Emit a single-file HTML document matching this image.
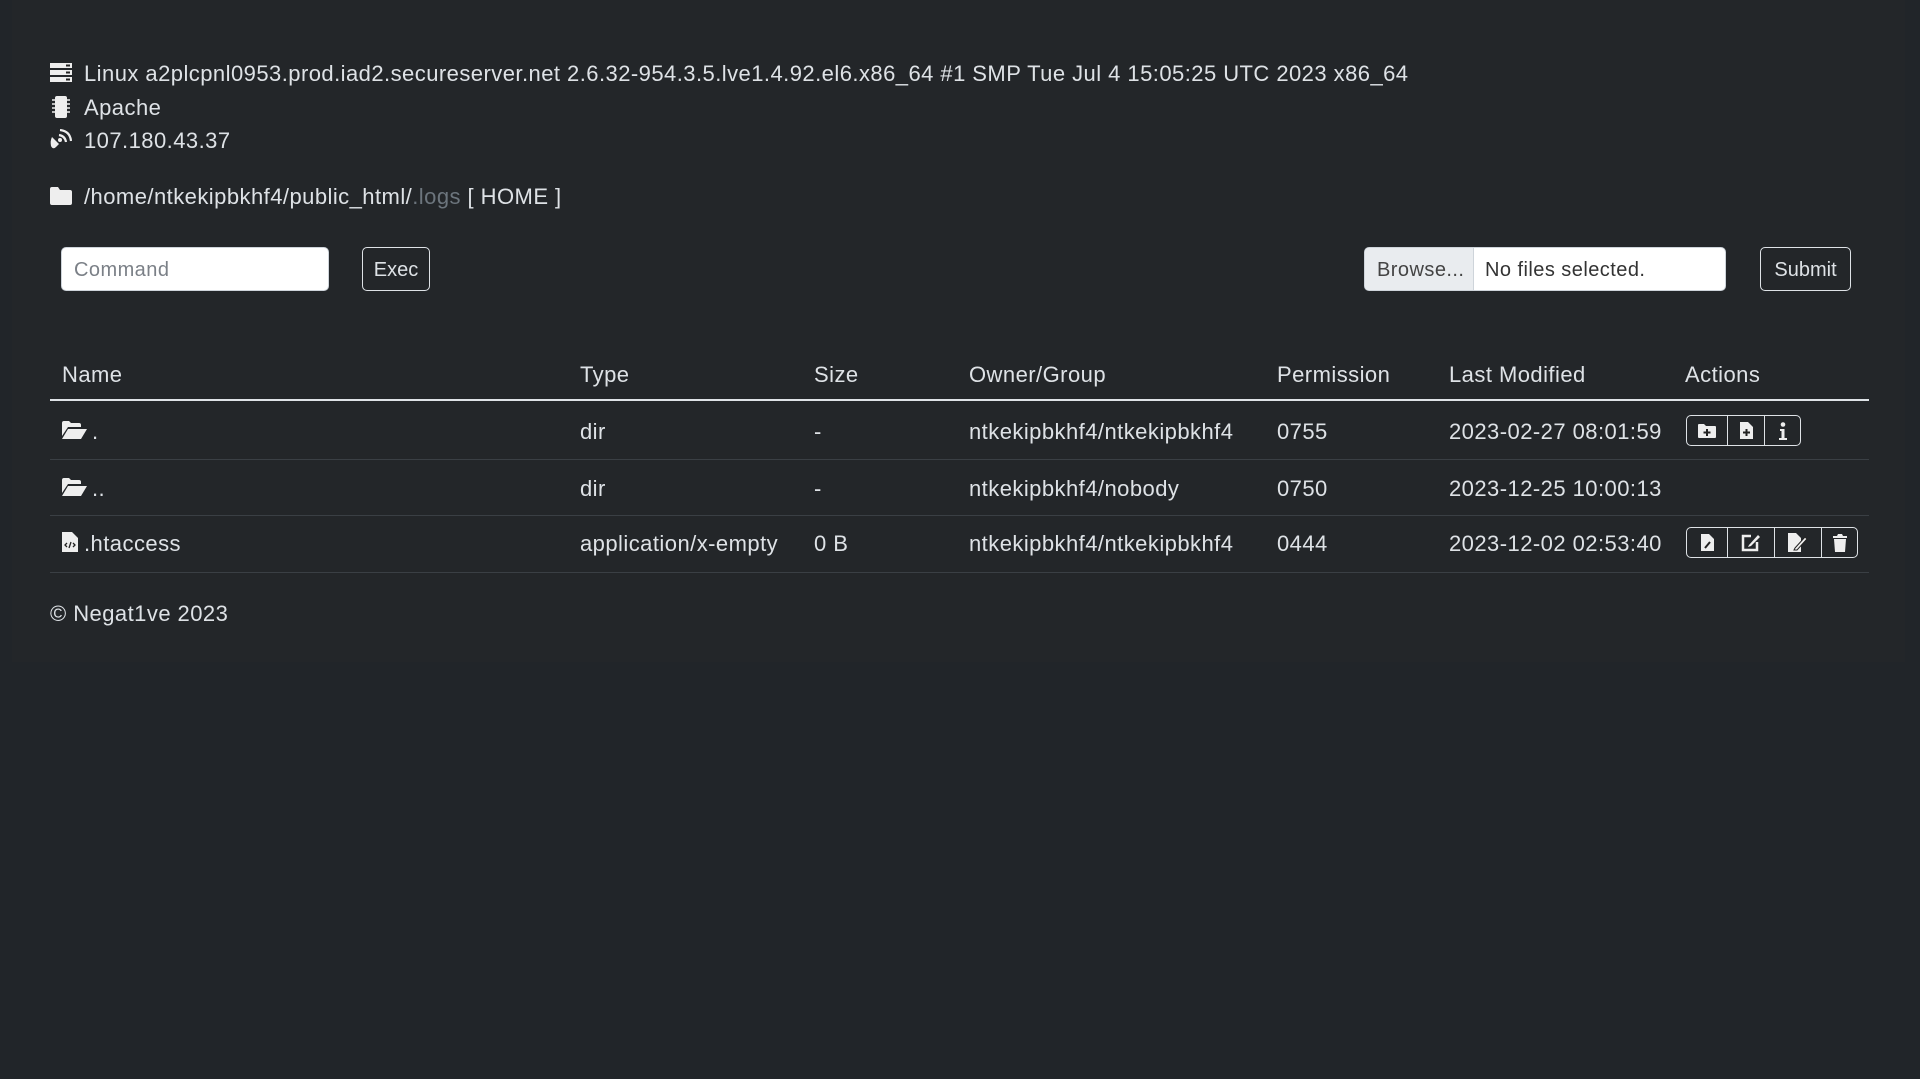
<!DOCTYPE html>
<html><head><meta charset="utf-8"><style>
html,body{margin:0;padding:0;width:1920px;height:1079px;background:#212529;overflow:hidden}
body{font-family:"Liberation Sans",sans-serif;color:#dee2e6;font-size:22px;position:relative}
.panel{position:absolute;left:12px;top:0;width:1893px;height:662px;background:#232629}
.t{position:absolute;white-space:nowrap;line-height:24px;letter-spacing:0.45px}
.ic{position:absolute}
.inp{position:absolute;background:#fff;border-radius:5px;border:1px solid #ced4da;box-sizing:border-box}
.btn{position:absolute;border:1px solid #dee2e6;border-radius:5px;box-sizing:border-box;color:#dee2e6;font-size:20px;text-align:center}
.hr{position:absolute;left:50px;width:1819px;height:1px;background:#3a3f44}
.grp{position:absolute;border:1px solid #dee2e6;border-radius:5px;box-sizing:border-box;height:31px;display:flex}
.grp div{border-right:1px solid #dee2e6;display:flex;align-items:center;justify-content:center}
.grp div:last-child{border-right:none}
</style></head><body>
<div class="panel"></div>

<svg class="ic" style="left:50px;top:63px" width="22" height="19" viewBox="0 0 22 19"><rect x="0" y="0" width="22" height="5" fill="#eee"/><rect x="0" y="7" width="22" height="5" fill="#eee"/><rect x="0" y="14" width="22" height="5" fill="#eee"/><rect x="16" y="1.5" width="4" height="2" fill="#222"/><rect x="16" y="8.5" width="4" height="2" fill="#222"/><rect x="16" y="15.5" width="4" height="2" fill="#222"/></svg>
<div class="t" style="left:84px;top:62px">Linux a2plcpnl0953.prod.iad2.secureserver.net 2.6.32-954.3.5.lve1.4.92.el6.x86_64 #1 SMP Tue Jul 4 15:05:25 UTC 2023 x86_64</div>

<svg class="ic" style="left:52px;top:96px" width="18" height="22" viewBox="0 0 18 22"><rect x="3" y="0" width="12" height="22" rx="2" fill="#eee"/><g stroke="#eee" stroke-width="1.5"><line x1="0" y1="4" x2="3" y2="4"/><line x1="0" y1="8" x2="3" y2="8"/><line x1="0" y1="12" x2="3" y2="12"/><line x1="0" y1="16" x2="3" y2="16"/><line x1="15" y1="4" x2="18" y2="4"/><line x1="15" y1="8" x2="18" y2="8"/><line x1="15" y1="12" x2="18" y2="12"/><line x1="15" y1="16" x2="18" y2="16"/></g></svg>
<div class="t" style="left:84px;top:96px">Apache</div>

<svg class="ic" style="left:50px;top:129px" width="22" height="22" viewBox="0 0 22 22"><path d="M2 8 L9 15 L6 18 Q3 21 1 17 Q0 12 2 8Z" fill="#eee"/><path d="M9 6 Q15 7 16 13" stroke="#eee" stroke-width="2.2" fill="none"/><path d="M10 1 Q20 2 21 12" stroke="#eee" stroke-width="2.2" fill="none"/><circle cx="10" cy="11" r="2" fill="#eee"/></svg>
<div class="t" style="left:84px;top:129px">107.180.43.37</div>

<svg class="ic" style="left:50px;top:187px" width="22" height="18" viewBox="0 0 22 18"><path d="M0 2 Q0 0 2 0 H8 L10 3 H20 Q22 3 22 5 V16 Q22 18 20 18 H2 Q0 18 0 16Z" fill="#eee"/></svg>
<div class="t" style="left:84px;top:185px">/home/ntkekipbkhf4/public_html/<span style="color:#6c757d">.logs</span> [ HOME ]</div>

<div class="inp" style="left:61px;top:247px;width:268px;height:44px"><span class="t" style="left:12px;top:10px;color:#7b8087;font-size:20px">Command</span></div>
<div class="btn" style="left:362px;top:247px;width:68px;height:44px;line-height:44px">Exec</div>

<div class="inp" style="left:1364px;top:247px;width:362px;height:44px;overflow:hidden">
 <div style="position:absolute;left:0;top:0;width:108px;height:44px;background:#e9ecef;border-right:1px solid #ced4da"></div>
 <span class="t" style="left:12px;top:10px;color:#444;font-size:20px">Browse...</span>
 <span class="t" style="left:120px;top:10px;color:#333;font-size:20px">No files selected.</span>
</div>
<div class="btn" style="left:1760px;top:247px;width:91px;height:44px;line-height:44px">Submit</div>

<div class="t" style="left:62px;top:363px">Name</div>
<div class="t" style="left:580px;top:363px">Type</div>
<div class="t" style="left:814px;top:363px">Size</div>
<div class="t" style="left:969px;top:363px">Owner/Group</div>
<div class="t" style="left:1277px;top:363px">Permission</div>
<div class="t" style="left:1449px;top:363px">Last Modified</div>
<div class="t" style="left:1685px;top:363px">Actions</div>
<div class="hr" style="top:399px;height:2px;background:#dee2e6"></div>

<svg class="ic" style="left:62px;top:421px" width="25" height="18" viewBox="0 0 25 18"><path d="M0 2 Q0 0 2 0 H7 L9 2 H17 Q19 2 19 4 V6 H6 L0 15Z" fill="#eee"/><path d="M6 8 H25 L19 18 H0Z" fill="#eee"/></svg>
<div class="t" style="left:92px;top:420px">.</div>
<div class="t" style="left:580px;top:420px">dir</div>
<div class="t" style="left:814px;top:420px">-</div>
<div class="t" style="left:969px;top:420px">ntkekipbkhf4/ntkekipbkhf4</div>
<div class="t" style="left:1277px;top:420px">0755</div>
<div class="t" style="left:1449px;top:420px">2023-02-27 08:01:59</div>
<div class="grp" style="left:1686px;top:415px;width:115px">
 <div style="width:40px"><svg width="18" height="14" viewBox="0 0 18 14"><path d="M0 1 Q0 0 1 0 H6 L8 2 H17 Q18 2 18 3 V13 Q18 14 17 14 H1 Q0 14 0 13Z" fill="#eee"/><path d="M9 5 V12 M5.5 8.5 H12.5" stroke="#222" stroke-width="2"/></svg></div>
 <div style="width:36px"><svg width="13" height="17" viewBox="0 0 13 17"><path d="M0 0 H8 L13 5 V17 H0Z" fill="#eee"/><path d="M6.5 7 V14 M3 10.5 H10" stroke="#222" stroke-width="2"/></svg></div>
 <div style="flex:1"><svg width="8" height="18" viewBox="0 0 8 18"><circle cx="4" cy="2.5" r="2.3" fill="#eee"/><path d="M1 7 H5.5 V16 H8 V18 H0 V16 H2.5 V9 H1Z" fill="#eee"/></svg></div>
</div>
<div class="hr" style="top:459px"></div>

<svg class="ic" style="left:62px;top:478px" width="25" height="18" viewBox="0 0 25 18"><path d="M0 2 Q0 0 2 0 H7 L9 2 H17 Q19 2 19 4 V6 H6 L0 15Z" fill="#eee"/><path d="M6 8 H25 L19 18 H0Z" fill="#eee"/></svg>
<div class="t" style="left:92px;top:477px">..</div>
<div class="t" style="left:580px;top:477px">dir</div>
<div class="t" style="left:814px;top:477px">-</div>
<div class="t" style="left:969px;top:477px">ntkekipbkhf4/nobody</div>
<div class="t" style="left:1277px;top:477px">0750</div>
<div class="t" style="left:1449px;top:477px">2023-12-25 10:00:13</div>
<div class="hr" style="top:515px"></div>

<svg class="ic" style="left:62px;top:532px" width="16" height="20" viewBox="0 0 16 20"><path d="M0 0 H10 L16 6 V20 H0Z" fill="#eee"/><path d="M5 11 L3 13 L5 15 M11 11 L13 13 L11 15 M9 10 L7 16" stroke="#222" stroke-width="1.3" fill="none"/></svg>
<div class="t" style="left:84px;top:532px">.htaccess</div>
<div class="t" style="left:580px;top:532px">application/x-empty</div>
<div class="t" style="left:814px;top:532px">0 B</div>
<div class="t" style="left:969px;top:532px">ntkekipbkhf4/ntkekipbkhf4</div>
<div class="t" style="left:1277px;top:532px">0444</div>
<div class="t" style="left:1449px;top:532px">2023-12-02 02:53:40</div>
<div class="grp" style="left:1686px;top:527px;width:172px">
 <div style="width:40px"><svg width="13" height="17" viewBox="0 0 13 17"><path d="M0 0 H8 L13 5 V17 H0Z" fill="#eee"/><path d="M4 14 L9 8" stroke="#222" stroke-width="2"/></svg></div>
 <div style="width:46px"><svg width="20" height="19" viewBox="0 0 20 19"><path d="M10 3 H2 V17 H16 V9" stroke="#eee" stroke-width="2.5" fill="none"/><path d="M8 12 L17 2 L19 4 L10 13 L7 14Z" fill="#eee"/></svg></div>
 <div style="width:46px"><svg width="20" height="19" viewBox="0 0 20 19"><path d="M0 0 H8 L13 5 V19 H0Z" fill="#eee"/><path d="M7 15 L17 4 L19 6 L9 17 L6 17Z" fill="#eee" stroke="#222" stroke-width="1"/></svg></div>
 <div style="flex:1"><svg width="14" height="18" viewBox="0 0 14 18"><path d="M0 2 H4 L5 0 H9 L10 2 H14 V4 H0Z" fill="#eee"/><path d="M1 5 H13 L12 18 H2Z" fill="#eee"/></svg></div>
</div>
<div class="hr" style="top:572px"></div>

<div class="t" style="left:50px;top:602px">© Negat1ve 2023</div>
</body></html>
